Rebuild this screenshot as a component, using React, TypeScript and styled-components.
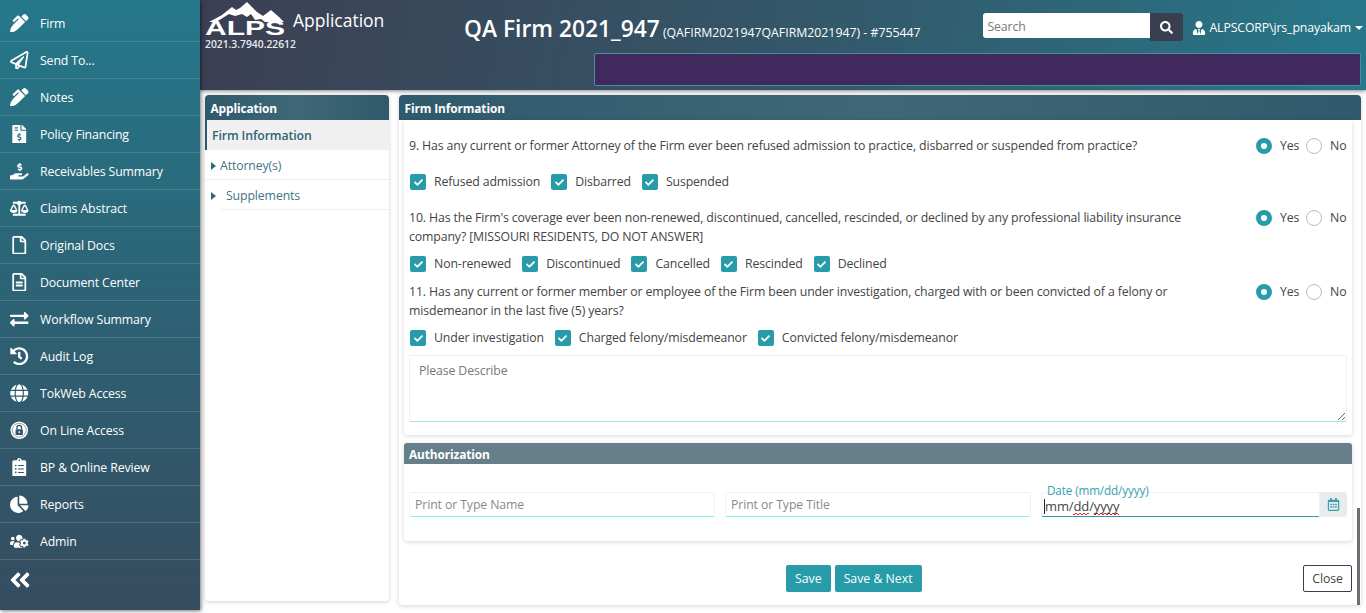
import React from 'react';
import styled, { createGlobalStyle } from 'styled-components';
import {
  FaPenAlt, FaRegPaperPlane, FaFileInvoiceDollar, FaHandHoldingUsd, FaBalanceScale,
  FaRegFile, FaRegFileAlt, FaExchangeAlt, FaHistory, FaGlobe, FaClipboardList,
  FaChartPie, FaUsersCog, FaAngleDoubleLeft, FaSearch, FaUserTie, FaCheck, FaRegCalendarAlt,
} from 'react-icons/fa';

const Global = createGlobalStyle`
  html, body { margin: 0; padding: 0; background: #fff; }
  body { font-family: "Open Sans", "Noto Sans", sans-serif; font-size: 12.3px; letter-spacing: -0.12px; color: #444; overflow: hidden; }
  * { box-sizing: border-box; }
`;

const Page = styled.div`
  display: flex;
  width: 1366px;
  height: 613px;
  overflow: hidden;
`;

const Sidebar = styled.nav`
  width: 200px;
  height: 610px;
  flex: none;
  position: relative;
  z-index: 2;
  background: linear-gradient(180deg, #24788a 0%, #364c5f 100%);
  box-shadow: 1px 1px 4px rgba(0, 0, 0, 0.55);
  padding-top: 5px;
  color: #fff;
`;

const NavItem = styled.div`
  height: 37px;
  display: flex;
  align-items: center;
  padding-left: 10px;
  border-bottom: 1px solid rgba(255, 255, 255, 0.14);
`;

const NavIcon = styled.span`
  width: 30px;
  flex: none;
  display: flex;
  align-items: center;
  svg { height: 18.5px; width: auto; }
`;

const Collapse = styled.div`
  padding: 8px 0 0 8px;
  font-size: 24px;
  line-height: 1;
`;

const Content = styled.div`
  flex: 1;
  display: flex;
  flex-direction: column;
  min-width: 0;
`;

const Header = styled.header`
  height: 90px;
  flex: none;
  display: flex;
  padding-left: 5px;
  background: linear-gradient(100deg, #3c3f53 0%, #33596b 55%, #26788a 100%);
  box-shadow: 0 1px 4px rgba(0, 0, 0, 0.5);
  color: #fff;
`;

const Brand = styled.div`
  width: 259px;
  flex: none;
  display: flex;
  gap: 8px;
`;

const LogoBlock = styled.div`
  width: 80px;
  padding-top: 1px;
`;

const LogoWord = styled.div`
  font-family: "Liberation Sans", sans-serif;
  font-weight: 700;
  font-size: 20px;
  letter-spacing: 0;
  line-height: 15px;
  margin-top: -1px;
  transform: scaleX(1.5);
  transform-origin: left center;
  white-space: nowrap;
`;

const Version = styled.div`
  font-size: 10.3px;
  letter-spacing: 0;
  font-weight: 600;
  line-height: 14px;
  margin-top: 1px;
  color: #e6ebef;
  white-space: nowrap;
`;

const AppName = styled.div`
  font-size: 17.5px;
  letter-spacing: 0;
  line-height: 24px;
  padding-top: 8px;
  white-space: nowrap;
`;

const HeaderMain = styled.div`
  flex: 1;
  min-width: 0;
`;

const TopRow = styled.div`
  height: 53px;
  display: flex;
  align-items: flex-start;
`;

const Title = styled.div`
  padding-top: 12px;
  font-size: 22.8px;
  letter-spacing: 0;
  line-height: 34px;
  font-weight: 600;
  white-space: nowrap;
`;

const SubTitle = styled.span`
  font-size: 12.3px;
  font-weight: 400;
  margin-left: 3px;
`;

const SearchBox = styled.div`
  margin: 13px 0 0 auto;
  display: flex;
  align-items: flex-start;
`;

const SearchInput = styled.input`
  width: 167px;
  height: 25px;
  border: 0;
  border-radius: 3px 0 0 3px;
  padding: 1px 4px 0;
  font: inherit;
  letter-spacing: inherit;
  outline: none;
  &::placeholder { color: #777; }
`;

const SearchButton = styled.div`
  width: 33px;
  height: 28px;
  background: #3a3f50;
  border-radius: 0 3px 3px 0;
  display: flex;
  align-items: center;
  justify-content: center;
  font-size: 13px;
`;

const UserMenu = styled.div`
  margin: 19px 3px 0 9px;
  display: flex;
  align-items: center;
  gap: 3px;
  line-height: 18px;
  white-space: nowrap;
`;

const Caret = styled.i`
  width: 0;
  height: 0;
  margin-left: 1px;
  border: 4px solid transparent;
  border-top-color: #fff;
  border-bottom: 0;
`;

const AlertBar = styled.div`
  height: 33px;
  margin: 0 5px 0 130px;
  background: #40295c;
  border: 1px solid #4b8c9e;
  border-radius: 2px;
`;

const Body = styled.div`
  flex: 1;
  min-height: 0;
  display: flex;
  gap: 10px;
  padding: 5px 5px 8px 5px;
`;

const SidePanel = styled.aside`
  width: 184px;
  height: 506px;
  flex: none;
  background: #fff;
  border-radius: 4px;
  box-shadow: 0 1px 4px rgba(0, 0, 0, 0.18);
`;

const PanelTitle = styled.div`
  height: 25px;
  display: flex;
  align-items: center;
  padding: 1px 0 0 5.5px;
  border-radius: 4px 4px 0 0;
  background: linear-gradient(90deg, #2f5a6c 0%, #3f6777 50%, #30596b 100%);
  color: #fff;
  font-size: 11.9px;
  font-weight: 700;
`;

const ActiveLink = styled.div`
  height: 30px;
  display: flex;
  align-items: center;
  padding-left: 5px;
  background: #f0f0f0;
  border-left: 2px solid #2f5a6c;
  color: #2f6575;
  font-weight: 600;
`;

const TreeRow = styled.div<{ $indent: number; $lineFrom: number }>`
  height: 30px;
  display: flex;
  align-items: center;
  padding: 1px 0 0 6px;
  color: #3f7585;
  background: linear-gradient(#efefef, #efefef) no-repeat ${(p) => p.$lineFrom}px 100% / 100% 1px;
  span { margin-left: ${(p) => p.$indent}px; }
`;

const Arrow = styled.i`
  width: 0;
  height: 0;
  flex: none;
  border: 4.5px solid transparent;
  border-left: 5px solid #2f6a7b;
  border-right: 0;
`;

const MainPanel = styled.main`
  flex: 1;
  min-width: 0;
  position: relative;
  height: 510px;
  background: #fff;
  border-radius: 4px;
  box-shadow: 0 1px 5px rgba(0, 0, 0, 0.18);
`;

const Scroller = styled.div`
  padding: 0 9px 0 5px;
`;

const Thumb = styled.div`
  position: absolute;
  right: 1px;
  top: 413px;
  width: 3px;
  height: 97px;
  background: #6d6d72;
`;

const Card = styled.section`
  background: #fff;
  border-radius: 0 0 3px 3px;
  box-shadow: 0 1px 4px rgba(0, 0, 0, 0.16);
  padding: 0 5px 13px;
`;

const QuestionRow = styled.div<{ $top: number }>`
  display: flex;
  justify-content: space-between;
  padding-top: ${(p) => p.$top}px;
  line-height: 19px;
`;

const QuestionText = styled.div`
  width: 790px;
`;

const WideQuestionText = styled(QuestionText)`
  width: auto;
`;

const RadioGroup = styled.div`
  width: 91px;
  flex: none;
  display: flex;
  align-items: center;
  height: 19px;
`;

const Radio = styled.i<{ $on?: boolean }>`
  width: 16px;
  height: 16px;
  flex: none;
  border-radius: 50%;
  border: ${(p) => (p.$on ? '5px solid #279ca8' : '1px solid #b5bcc4')};
  background: #fff;
`;

const RadioLabel = styled.span`
  margin-left: 8px;
  width: 26px;
  flex: none;
`;

const CheckRow = styled.div<{ $top: number; $bottom: number }>`
  display: flex;
  gap: 11px;
  padding: ${(p) => p.$top}px 0 ${(p) => p.$bottom}px 1px;
  line-height: 18px;
`;

const CheckItem = styled.label`
  display: flex;
  align-items: center;
  gap: 8px;
  white-space: nowrap;
`;

const CheckBox = styled.span`
  width: 16px;
  height: 16px;
  border-radius: 2px;
  background: #279ca8;
  color: #fff;
  font-size: 9px;
  display: flex;
  align-items: center;
  justify-content: center;
`;

const Describe = styled.textarea`
  display: block;
  width: 100%;
  height: 67px;
  margin-top: 8px;
  padding: 6px 9px;
  border: 1px solid #f0f0f0;
  border-bottom: 1px solid #a5e6ea;
  border-radius: 2px;
  font: inherit;
  letter-spacing: inherit;
  outline: none;
  &::placeholder { color: #777; }
`;

const AuthCard = styled.section`
  margin-top: 8px;
  background: #fff;
  border-radius: 3px;
  box-shadow: 0 1px 4px rgba(0, 0, 0, 0.16);
`;

const AuthTitle = styled.div`
  height: 21px;
  display: flex;
  align-items: center;
  padding-left: 5px;
  border-radius: 3px 3px 0 0;
  background: #667f8a;
  color: #fff;
  font-size: 11.9px;
  font-weight: 700;
`;

const AuthFields = styled.div`
  display: flex;
  gap: 10px;
  padding: 28px 5px 24px;
`;

const Field = styled.input`
  width: 306px;
  height: 25px;
  padding: 0 5px;
  border: 1px solid #f2f2f2;
  border-bottom: 1px solid #8eeef5;
  border-radius: 2px;
  font: inherit;
  letter-spacing: inherit;
  outline: none;
  &::placeholder { color: #8a8a8a; }
`;

const DateField = styled.div`
  flex: 1;
  display: flex;
  position: relative;
`;

const DateLabel = styled.span`
  position: absolute;
  left: 5px;
  top: -9px;
  padding: 0 1px;
  font-size: 11.7px;
  line-height: 14px;
  color: #37a4b4;
`;

const DateValue = styled.div`
  flex: 1;
  height: 25px;
  padding-left: 2px;
  border: 1px solid #f2f2f2;
  border-bottom: 1px solid #279ca8;
  border-radius: 2px;
  font-size: 13px;
  line-height: 26px;
  color: #444;
`;

const Cursor = styled.i`
  display: inline-block;
  width: 1px;
  height: 15px;
  vertical-align: -3px;
  background: #222;
`;

const Misspelt = styled.span`
  display: inline-block;
  line-height: 17px;
  background:
    linear-gradient(135deg, transparent 35%, #e0202a 35% 65%, transparent 65%) 0 100% / 4px 2px repeat-x,
    linear-gradient(45deg, transparent 35%, #e0202a 35% 65%, transparent 65%) 2px 100% / 4px 2px repeat-x;
`;

const DateAddon = styled.div`
  width: 27px;
  background: #e9ecef;
  border-radius: 0 3px 3px 0;
  color: #3c9dab;
  font-size: 13px;
  display: flex;
  align-items: center;
  justify-content: center;
`;

const Actions = styled.div`
  display: flex;
  align-items: center;
  padding: 24px 0 0 382px;
`;

const ButtonGroup = styled.div`
  display: flex;
  gap: 4px;
`;

const Primary = styled.button`
  height: 27px;
  padding: 0 9px;
  border: 0;
  border-radius: 2px;
  background: #279ca8;
  color: #fff;
  font: inherit;
  letter-spacing: 0;
`;

const CloseButton = styled.button`
  margin-left: auto;
  height: 27px;
  width: 49px;
  padding: 0;
  border: 1px solid #3a3f50;
  border-radius: 2px;
  background: #fff;
  color: #444;
  font: inherit;
  letter-spacing: inherit;
`;

const Logo = () => (
  <svg width="80" height="21" viewBox="0 0 80 21" style={{ display: 'block' }}>
    <path fill="#fff" d="M4 21 L17 14 L27 6 L31 9 L35 7 L42 1 L52 11 L58 15 L66 9 L74 16 L79 21 L60 21 L56 18 L50 19 L46 13 L42 16 L37 13 L30 15 L24 13 L16 18 L11 21 Z" />
  </svg>
);

const LockIcon = () => (
  <svg viewBox="0 0 20 20">
    <circle cx="10" cy="10" r="9.5" fill="#fff" />
    <circle cx="10" cy="10" r="7.5" fill="none" stroke="#8d9aa4" strokeWidth="1" />
    <path fill="none" stroke="#33566a" strokeWidth="1.4" d="M7.5 9V7.2a2.5 2.5 0 0 1 5 0V9" />
    <rect x="6" y="9" width="8" height="6" rx="1" fill="#33566a" />
    <circle cx="10" cy="12" r="1" fill="#fff" />
  </svg>
);

const navItems: [React.ReactNode, string][] = [
  [<FaPenAlt />, 'Firm'],
  [<FaRegPaperPlane />, 'Send To...'],
  [<FaPenAlt />, 'Notes'],
  [<FaFileInvoiceDollar />, 'Policy Financing'],
  [<FaHandHoldingUsd />, 'Receivables Summary'],
  [<FaBalanceScale />, 'Claims Abstract'],
  [<FaRegFile />, 'Original Docs'],
  [<FaRegFileAlt />, 'Document Center'],
  [<FaExchangeAlt />, 'Workflow Summary'],
  [<FaHistory />, 'Audit Log'],
  [<FaGlobe />, 'TokWeb Access'],
  [<LockIcon />, 'On Line Access'],
  [<FaClipboardList />, 'BP & Online Review'],
  [<FaChartPie />, 'Reports'],
  [<FaUsersCog />, 'Admin'],
];

const Check = ({ label }: { label: string }) => (
  <CheckItem>
    <CheckBox><FaCheck /></CheckBox>
    {label}
  </CheckItem>
);

const YesNo = () => (
  <RadioGroup>
    <Radio $on />
    <RadioLabel>Yes</RadioLabel>
    <Radio />
    <RadioLabel>No</RadioLabel>
  </RadioGroup>
);

export default function App() {
  return (
    <Page>
      <Global />
      <Sidebar>
        {navItems.map(([icon, label]) => (
          <NavItem key={label}>
            <NavIcon>{icon}</NavIcon>
            {label}
          </NavItem>
        ))}
        <Collapse><FaAngleDoubleLeft /></Collapse>
      </Sidebar>

      <Content>
        <Header>
          <Brand>
            <LogoBlock>
              <Logo />
              <LogoWord>ALPS</LogoWord>
              <Version>2021.3.7940.22612</Version>
            </LogoBlock>
            <AppName>Application</AppName>
          </Brand>
          <HeaderMain>
            <TopRow>
              <Title>
                QA Firm 2021_947
                <SubTitle>(QAFIRM2021947QAFIRM2021947) - #755447</SubTitle>
              </Title>
              <SearchBox>
                <SearchInput placeholder="Search" />
                <SearchButton><FaSearch /></SearchButton>
              </SearchBox>
              <UserMenu>
                <FaUserTie size={14} />
                ALPSCORP\jrs_pnayakam
                <Caret />
              </UserMenu>
            </TopRow>
            <AlertBar />
          </HeaderMain>
        </Header>

        <Body>
          <SidePanel>
            <PanelTitle>Application</PanelTitle>
            <ActiveLink>Firm Information</ActiveLink>
            <TreeRow $indent={4} $lineFrom={0}><Arrow /><span>Attorney(s)</span></TreeRow>
            <TreeRow $indent={10} $lineFrom={16}><Arrow /><span>Supplements</span></TreeRow>
          </SidePanel>

          <MainPanel>
            <PanelTitle>Firm Information</PanelTitle>
            <Scroller>
              <Card>
                <QuestionRow $top={16}>
                  <WideQuestionText>
                    9. Has any current or former Attorney of the Firm ever been refused admission to practice, disbarred or suspended from practice?
                  </WideQuestionText>
                  <YesNo />
                </QuestionRow>
                <CheckRow $top={18} $bottom={17}>
                  <Check label="Refused admission" />
                  <Check label="Disbarred" />
                  <Check label="Suspended" />
                </CheckRow>
                <QuestionRow $top={0}>
                  <QuestionText>
                    10. Has the Firm's coverage ever been non-renewed, discontinued, cancelled, rescinded, or declined by any professional liability insurance company? [MISSOURI RESIDENTS, DO NOT ANSWER]
                  </QuestionText>
                  <YesNo />
                </QuestionRow>
                <CheckRow $top={9} $bottom={9}>
                  <Check label="Non-renewed" />
                  <Check label="Discontinued" />
                  <Check label="Cancelled" />
                  <Check label="Rescinded" />
                  <Check label="Declined" />
                </CheckRow>
                <QuestionRow $top={0}>
                  <QuestionText>
                    11. Has any current or former member or employee of the Firm been under investigation, charged with or been convicted of a felony or misdemeanor in the last five (5) years?
                  </QuestionText>
                  <YesNo />
                </QuestionRow>
                <CheckRow $top={9} $bottom={0}>
                  <Check label="Under investigation" />
                  <Check label="Charged felony/misdemeanor" />
                  <Check label="Convicted felony/misdemeanor" />
                </CheckRow>
                <Describe placeholder="Please Describe" />
              </Card>

              <AuthCard>
                <AuthTitle>Authorization</AuthTitle>
                <AuthFields>
                  <Field placeholder="Print or Type Name" />
                  <Field placeholder="Print or Type Title" />
                  <DateField>
                    <DateLabel>Date (mm/dd/yyyy)</DateLabel>
                    <DateValue>
                      <Cursor />mm/<Misspelt>dd</Misspelt>/<Misspelt>yyyy</Misspelt>
                    </DateValue>
                    <DateAddon><FaRegCalendarAlt /></DateAddon>
                  </DateField>
                </AuthFields>
              </AuthCard>

              <Actions>
                <ButtonGroup>
                  <Primary>Save</Primary>
                  <Primary>Save &amp; Next</Primary>
                </ButtonGroup>
                <CloseButton>Close</CloseButton>
              </Actions>
            </Scroller>
            <Thumb />
          </MainPanel>
        </Body>
      </Content>
    </Page>
  );
}
